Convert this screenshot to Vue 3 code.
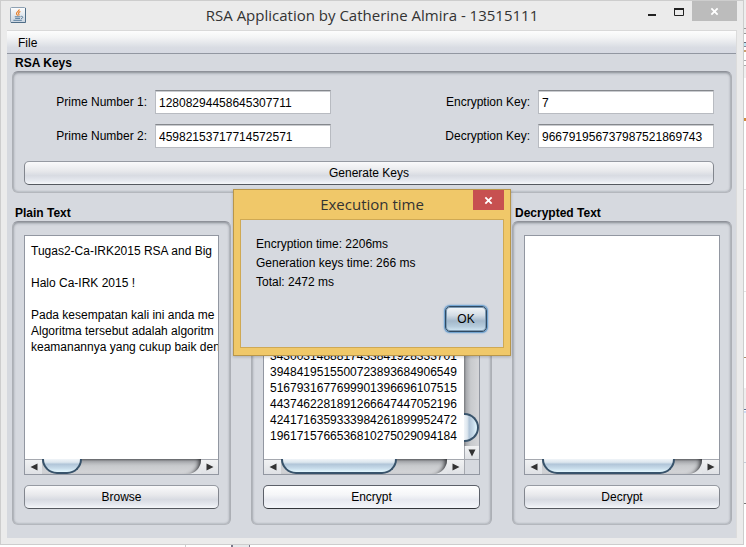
<script setup>
import { ref } from 'vue'

const prime1 = ref('12808294458645307711')
const prime2 = ref('45982153717714572571')
const encryptionKey = ref('7')
const decryptionKey = ref('966791956737987521869743')

const plainText = ref(
  [
    'Tugas2-Ca-IRK2015 RSA and Big',
    '',
    'Halo Ca-IRK 2015 !',
    '',
    'Pada kesempatan kali ini anda me',
    'Algoritma tersebut adalah algoritm',
    'keamanannya yang cukup baik den'
  ].join('\n')
)
const cipherText = ref(
  [
    '3430031488817433841928333701',
    '3948419515500723893684906549',
    '5167931677699901396696107515',
    '4437462281891266647447052196',
    '4241716359333984261899952472',
    '1961715766536810275029094184'
  ].join('\n')
)
const decryptedText = ref('')
const results = ['Encryption time: 2206ms', 'Generation keys time: 266 ms', 'Total: 2472 ms']
const thumbs = { plain: '25%', cipher: '70%', decrypted: '83%' }
</script>

<template>
  <div class="desktop">
    <main class="window">
      <header class="titlebar">
        <svg class="app-icon" viewBox="0 0 16 16" aria-hidden="true">
          <defs>
            <linearGradient id="tile" x1="0" y1="0" x2="0" y2="1">
              <stop offset="0" stop-color="#fdfdfd" />
              <stop offset="1" stop-color="#c9d4e0" />
            </linearGradient>
          </defs>
          <rect x="0.5" y="0.5" width="15" height="15" rx="1" fill="url(#tile)" stroke="#8ea1b3" />
          <path d="M1 15.5h14.5V1" fill="none" stroke="#4f6d87" />
          <path d="M9.2 2.400C9.600 4 6.200 4.800 6.500 6.600c.2.900.9 1.300 1.100 2M10.400 4.600C8.800 5.200 8.200 5.900 8.800 6.900c.4.6.2 1.200-.2 1.700" fill="none" stroke="#e77a22" stroke-width="1.100" />
          <path d="M4.800 9.800h5.600M5.200 11.400h4.800M3.400 13.300h8.400M10.800 9.400c2.400-.5 2.800 1.700.2 2.300" fill="none" stroke="#5b7f9e" />
        </svg>
        <h1>RSA Application by Catherine Almira - 13515111</h1>
        <div class="controls">
          <button type="button" class="control" aria-label="Minimize">
            <svg viewBox="0 0 10 10"><path d="M1 8h8" stroke="#222" stroke-width="2" /></svg>
          </button>
          <button type="button" class="control" aria-label="Maximize">
            <svg viewBox="0 0 10 10"><path d="M.5 1v7.500h9V1" fill="none" stroke="#222" /><path d="M0 2h10" stroke="#222" stroke-width="2" /></svg>
          </button>
          <button type="button" class="control close" aria-label="Close">
            <svg viewBox="0 0 10 10"><path d="M1.500 1.500l7 7M8.500 1.500l-7 7" stroke="#fff" stroke-width="2" /></svg>
          </button>
        </div>
      </header>

      <div class="client">
        <nav class="menubar"><button type="button">File</button></nav>

        <section class="group keys">
          <h2>RSA Keys</h2>
          <div class="panel">
            <div class="fields">
              <label for="p1">Prime Number 1:</label>
              <input id="p1" v-model="prime1" type="text" />
              <label for="ek">Encryption Key:</label>
              <input id="ek" v-model="encryptionKey" type="text" />
              <label for="p2">Prime Number 2:</label>
              <input id="p2" v-model="prime2" type="text" />
              <label for="dk">Decryption Key:</label>
              <input id="dk" v-model="decryptionKey" type="text" />
            </div>
            <button type="button" class="push">Generate Keys</button>
          </div>
        </section>

        <div class="columns">
          <section class="group">
            <h2><label for="plain">Plain Text</label></h2>
            <div class="panel">
              <div class="scrollpane">
                <div class="viewport">
                  <textarea id="plain" v-model="plainText" class="fill" wrap="off" spellcheck="false"></textarea>
                </div>
                <div class="hbar">
                  <button type="button" class="arrow" aria-label="Scroll left"><svg viewBox="0 0 8 8"><path d="M7.500.5v7L.5 4z" /></svg></button>
                  <div class="track"><div class="thumb" :style="{ width: thumbs.plain }"></div></div>
                  <button type="button" class="arrow" aria-label="Scroll right"><svg viewBox="0 0 8 8"><path d="M.5.5v7l7-3.500z" /></svg></button>
                </div>
              </div>
              <button type="button" class="push">Browse</button>
            </div>
          </section>

          <section class="group">
            <h2>&nbsp;</h2>
            <div class="panel">
              <div class="scrollpane both">
                <div class="viewport bottom">
                  <textarea v-model="cipherText" rows="6" wrap="off" spellcheck="false" aria-label="Encrypted text"></textarea>
                </div>
                <div class="vbar">
                  <div class="vtrack"><div class="vthumb"></div></div>
                  <button type="button" class="arrow down" aria-label="Scroll down"><svg viewBox="0 0 8 8"><path d="M.5.5h7L4 7.500z" /></svg></button>
                </div>
                <div class="hbar">
                  <button type="button" class="arrow" aria-label="Scroll left"><svg viewBox="0 0 8 8"><path d="M7.500.5v7L.5 4z" /></svg></button>
                  <div class="track"><div class="thumb" :style="{ width: thumbs.cipher }"></div></div>
                  <button type="button" class="arrow" aria-label="Scroll right"><svg viewBox="0 0 8 8"><path d="M.5.5v7l7-3.500z" /></svg></button>
                </div>
                <div class="corner"></div>
              </div>
              <button type="button" class="push hover">Encrypt</button>
            </div>
          </section>

          <section class="group">
            <h2><label for="decrypted">Decrypted Text</label></h2>
            <div class="panel">
              <div class="scrollpane">
                <div class="viewport">
                  <textarea id="decrypted" v-model="decryptedText" class="fill" wrap="off" spellcheck="false"></textarea>
                </div>
                <div class="hbar">
                  <button type="button" class="arrow" aria-label="Scroll left"><svg viewBox="0 0 8 8"><path d="M7.500.5v7L.5 4z" /></svg></button>
                  <div class="track"><div class="thumb" :style="{ width: thumbs.decrypted }"></div></div>
                  <button type="button" class="arrow" aria-label="Scroll right"><svg viewBox="0 0 8 8"><path d="M.5.5v7l7-3.500z" /></svg></button>
                </div>
              </div>
              <button type="button" class="push">Decrypt</button>
            </div>
          </section>
        </div>
      </div>

      <div class="dialog" role="dialog" aria-labelledby="dialog-title">
        <div class="dialog-head">
          <h2 id="dialog-title">Execution time</h2>
          <button type="button" class="dialog-close" aria-label="Close">
            <svg viewBox="0 0 10 10"><path d="M1.500 1.500l7 7M8.500 1.500l-7 7" stroke="#fff" stroke-width="2" /></svg>
          </button>
        </div>
        <div class="dialog-body">
          <p v-for="line in results" :key="line">{{ line }}</p>
          <button type="button" class="ok">OK</button>
        </div>
      </div>
    </main>
  </div>
</template>

<style>
body {
  background: #fff;
}
</style>

<style scoped>
* {
  box-sizing: border-box;
}
/* The thin margins show slivers of the windows lying behind this one. */
.desktop {
  padding: 0 2px 2px 0;
  background:
    linear-gradient(
        #eee 28px, #999 28px 29px, #eee 29px 33px, #999 33px 34px, #fff 34px 42px,
        #667 42px 43px, #bfe6f2 43px 46px, #889 46px 47px, #fff 47px 50px, #c9a070 50px 52px,
        #fff 52px 60px, #aaa 60px 61px, #fff 61px 65px, #aaa 65px 66px, #f0f0f0 66px 78px,
        #fff 78px 118px, #d08a3c 118px 121px, #fff 121px 189px, #e4e4e4 189px 190px,
        #fff 190px 291px, #e4e4e4 291px 292px, #fff 292px 357px, #a98c6a 357px 358px,
        #fff 358px 388px, #eee 388px 409px, #5f7290 409px 410px, #fff 410px 411px,
        #cfdcf5 411px 413px, #f6f6f6 413px 462px, #c5ccd8 462px 463px, #f6f6f6 463px 503px,
        #777 503px 504px, #fff 504px
      )
      right top / 2px 100% no-repeat,
    linear-gradient(
        90deg, #fff 185px, #ccc 185px 186px, #fff 186px 231px, #778 231px 233px,
        #e6eaec 233px 249px, #778 249px 250px, #fff 250px
      )
      left bottom / 100% 2px no-repeat;
  font-family: 'Liberation Sans', Arial, sans-serif;
  font-size: 12px;
  line-height: 16px;
  color: #000;
}
h1,
h2,
p {
  margin: 0;
}
button,
input,
textarea {
  font: inherit;
  color: inherit;
  margin: 0;
  border: 0;
  padding: 0;
  outline: 0;
  border-radius: 0;
}
.window {
  position: relative;
  border: 1px solid #cdcdcd;
  background: #ebebeb;
  padding: 0 6px 6px;
}
.titlebar {
  display: grid;
  grid-template-columns: 1fr auto 1fr;
  height: 29px;
}
.app-icon {
  width: 16px;
  height: 16px;
  margin: 6px 0 0 3px;
}
h1,
.dialog h2 {
  font-family: 'Open Sans', 'Noto Sans', sans-serif;
  font-weight: 400;
  font-size: 15px;
  line-height: 28px;
  color: #333;
  white-space: nowrap;
}
.controls {
  display: flex;
  justify-content: flex-end;
  align-items: flex-start;
}
.control {
  width: 27px;
  height: 20px;
  background: none;
  display: grid;
  place-items: center;
}
.control svg,
.dialog-close svg {
  width: 10px;
  height: 10px;
}
.close {
  width: 45px;
  background: #bcbcbc;
}
.control svg {
  margin-top: 1px;
}
.close svg,
.dialog-close svg {
  width: 9px;
  height: 9px;
}
.client {
  background: #d6d9df;
  border-top: 1px solid #d9d9d9;
  border-right: 1px solid #dcdcdc;
  padding-bottom: 13px;
}
.menubar {
  height: 23px;
  padding: 3px 11px;
  background: linear-gradient(#fdfdfd 0, #f3f4f5 30%, #d9dce3 75%, #d6d9e2 100%);
  border-bottom: 1px solid #9297a1;
}
.menubar button {
  display: block;
  background: none;
  line-height: 18px;
}
.group h2 {
  font-size: 12px;
  line-height: 16px;
  padding-left: 3px;
}
.keys {
  padding: 1px 4px 0 5px;
}
.panel {
  border: 1px solid #acafb5;
  border-top-color: #8e9199;
  border-bottom-color: #b4b7bd;
  border-radius: 6px;
  box-shadow: inset 0 1px 3px rgba(70, 75, 85, 0.5), inset 0 0 2px rgba(70, 75, 85, 0.3);
}
.keys .panel {
  padding: 18px 17px 7px 11px;
}
.fields {
  display: grid;
  grid-template-columns: 123px 176px 1fr 176px;
  column-gap: 8px;
  row-gap: 10px;
  margin-bottom: 13px;
}
.fields label {
  text-align: right;
  line-height: 24px;
}
.fields input {
  width: 100%;
  height: 24px;
  background: #fff;
  border: 1px solid #b8bbc1;
  border-top: 1px solid #84878c;
  box-shadow: inset 0 1px 0 #c9cbcf;
  padding: 1px 3px 0;
}
.push {
  display: block;
  width: 100%;
  height: 24px;
  border: 1px solid #82868e;
  border-top-color: #969aa2;
  border-bottom-color: #555960;
  border-radius: 5px;
  background: linear-gradient(#fafafb 0, #e8e9ec 40%, #d8dbe2 62%, #e6e9ef 85%, #f5f7fa 100%);
  text-align: center;
}
.push.hover {
  border-color: #5c6069;
  border-bottom-color: #33363b;
  background: linear-gradient(#fff 0, #f5f6f8 40%, #e7e9f0 62%, #f4f6fa 100%);
}
.columns {
  display: grid;
  grid-template-columns: 219fr 241fr 220fr;
  gap: 20px;
  padding: 12px 4px 0 5px;
}
.columns .group {
  min-width: 0;
}
.columns .panel {
  padding: 13px 11px 15px;
}
.scrollpane {
  border: 1px solid #9297a1;
  display: grid;
  grid-template-columns: minmax(0, 1fr);
  grid-template-rows: 223px 15px;
  margin-bottom: 10px;
}
.scrollpane.both {
  grid-template-columns: minmax(0, 1fr) 15px;
}
.viewport {
  background: #fff;
  display: flex;
  flex-direction: column;
  min-width: 0;
}
.viewport.bottom {
  justify-content: flex-end;
  padding-bottom: 15px;
}
textarea {
  display: block;
  width: 100%;
  resize: none;
  overflow: hidden;
  background: #fff;
  padding: 0 0 0 6px;
  line-height: 16px;
  white-space: pre;
}
textarea.fill {
  flex: 1;
  padding-top: 7px;
}
.hbar {
  display: flex;
  background: #e4e6e9;
  border-top: 1px solid #a5a8af;
}
.arrow {
  flex: 0 0 17px;
  display: grid;
  place-items: center;
  background: linear-gradient(#f1f2f3, #dfe1e5);
}
.arrow svg {
  width: 8px;
  height: 8px;
  fill: #333;
}
.track {
  flex: 1;
  margin-top: -1px;
  background: linear-gradient(#77797d 0, #a9abaf 15%, #c8cacd 45%, #d5d6d9 100%);
  border-bottom-right-radius: 14px;
  box-shadow: inset -4px 1px 4px -2px #303236;
}
.thumb {
  height: 15px;
  border: 2px solid #38536b;
  border-top: 0;
  border-radius: 0 0 16px 16px;
  background: linear-gradient(#f0f4f8 0, #dce6ee 25%, #b1c5d8 40%, #c6dae9 70%, #e4f8ff 100%);
}
.vbar {
  display: flex;
  flex-direction: column;
  border-left: 1px solid #a5a8af;
}
.vtrack {
  flex: 1;
  display: flex;
  flex-direction: column;
  justify-content: flex-end;
  padding-bottom: 4px;
  margin-left: -1px;
  background: linear-gradient(90deg, #77797d 0, #a9abaf 15%, #c8cacd 45%, #d5d6d9 100%);
}
.vthumb {
  height: 29px;
  border: 2px solid #38536b;
  border-left: 0;
  border-radius: 0 16px 16px 0;
  background: linear-gradient(90deg, #f0f4f8 0, #dce6ee 25%, #b1c5d8 40%, #c6dae9 70%, #e4f8ff 100%);
}
.arrow.down {
  flex-basis: 13px;
}
.corner {
  border-left: 1px solid #a5a8af;
  border-top: 1px solid #a5a8af;
}
.dialog {
  position: absolute;
  top: 188px;
  left: 50%;
  width: 278px;
  transform: translateX(-50%);
  border: 1px solid #b8964a;
  background: #f0c869;
  padding: 0 6px 7px;
  box-shadow: 0 1px 3px rgba(0, 0, 0, 0.2);
}
.dialog-head {
  display: grid;
  grid-template-columns: 31px 1fr 31px;
  align-items: start;
  height: 29px;
}
.dialog h2 {
  grid-column: 2;
  text-align: center;
}
.dialog-close {
  height: 20px;
  background: #c75050;
  display: grid;
  place-items: center;
}
.dialog-body {
  display: flex;
  flex-direction: column;
  border: 1px solid #cfa954;
  background: #d6d9df;
  padding: 15px 16px 15px 15px;
}
.dialog-body p {
  line-height: 19px;
}
.ok {
  align-self: flex-end;
  width: 42px;
  height: 26px;
  margin-top: 14px;
  border: 1px solid #2f4a63;
  border-radius: 5px;
  box-shadow: 0 0 0 1px #73a4d1, 0 0 2px 1px #73a4d1, inset 0 0 0 1px #7e9bb4;
  background: linear-gradient(#f4f7f9 0, #d2dce5 35%, #a3b8cb 58%, #b4cadb 80%, #d3e8f5 100%);
}
</style>
